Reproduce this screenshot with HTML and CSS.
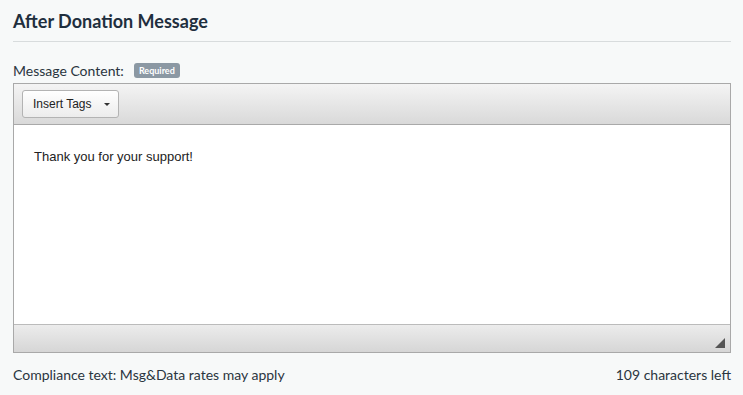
FILE: index.html
```html
<!DOCTYPE html>
<html>
  <head>
    <meta charset="UTF-8">
    <title>After Donation Message</title>
    <link rel="stylesheet" href="styles.css">
  </head>
  <body>
    <div id="panel">
      <!-- Header -->
      <h2 class="panel-title">After Donation Message</h2>

      <!-- Message editor -->
      <div class="field-label">
        Message Content:
        <span class="badge">Required</span>
      </div>
      <div class="editor">
        <div class="editor-toolbar">
          <button class="tag-button" type="button">Insert Tags <span class="caret"></span></button>
        </div>
        <div class="editor-body">Thank you for your support!</div>
        <div class="editor-status">
          <span class="resize-grip"></span>
        </div>
      </div>

      <!-- Footer -->
      <div class="editor-footer">
        <span>Compliance text: Msg&amp;Data rates may apply</span>
        <span>109 characters left</span>
      </div>
    </div>
  </body>
</html>
```

FILE: styles.css
```css
body {
  margin: 0;
  background-color: #f7f9f9;
  font-family: Lato, "Open Sans", sans-serif;
  color: #26323d;
}
#panel {
  padding: 0 12px 0 13px;
}
.panel-title {
  margin: 0;
  padding: 10px 0 9px;
  font-size: 18px;
  font-weight: bold;
  color: #1f2f3e;
  border-bottom: 1px solid #d8dcdd;
}
.field-label {
  display: flex;
  align-items: center;
  gap: 10px;
  margin-top: 19px;
  height: 18px;
  font-size: 14px;
  color: #2a3540;
}
.badge {
  background-color: #8b98a3;
  color: #ffffff;
  font-size: 9px;
  font-weight: bold;
  padding: 2px 5px;
  border-radius: 3px;
}
.editor {
  margin-top: 4px;
  border: 1px solid #a9a9a9;
  background-color: #ffffff;
}
.editor-toolbar {
  height: 41px;
  padding: 6px 0 0 8px;
  box-sizing: border-box;
  background: linear-gradient(#f4f4f4, #d9d9d9);
  border-bottom: 1px solid #a9a9a9;
}
.tag-button {
  height: 28px;
  padding: 0 8px 0 10px;
  font-family: "Liberation Sans", Arial, sans-serif;
  font-size: 12px;
  color: #222222;
  background: linear-gradient(#ffffff, #ececec);
  border: 1px solid #b3b3b3;
  border-radius: 3px;
}
.caret {
  display: inline-block;
  margin-left: 9px;
  vertical-align: middle;
  border-top: 3px solid #333333;
  border-left: 3px solid transparent;
  border-right: 3px solid transparent;
}
.editor-body {
  height: 200px;
  padding: 24px 20px 0;
  box-sizing: border-box;
  font-family: "Liberation Sans", Arial, sans-serif;
  font-size: 13px;
  color: #222222;
  border-bottom: 1px solid #bbbbbb;
}
.editor-status {
  height: 27px;
  display: flex;
  justify-content: flex-end;
  align-items: flex-end;
  padding: 0 5px 4px 0;
  box-sizing: border-box;
  background: linear-gradient(#ececec, #d6d6d6);
}
.resize-grip {
  width: 0;
  height: 0;
  border-bottom: 10px solid #555555;
  border-left: 10px solid transparent;
}
.editor-footer {
  display: flex;
  justify-content: space-between;
  margin-top: 13px;
  font-size: 14px;
  color: #2a3540;
}
```
